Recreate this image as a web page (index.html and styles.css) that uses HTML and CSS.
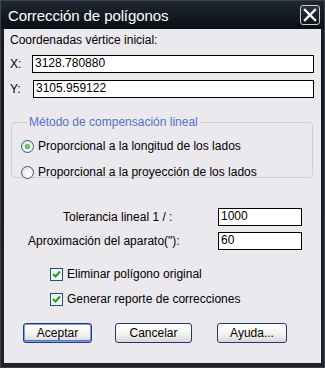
FILE: index.html
```html
<!DOCTYPE html>
<html lang="es">
<head>
    <meta charset="UTF-8">
    <title>Corrección de polígonos</title>
    <link rel="stylesheet" href="styles.css">
</head>
<body>
    <div class="window">
        <div class="titlebar">
            <span class="title">Corrección de polígonos</span>
            <span class="close">
                <svg width="14" height="14" viewBox="0 0 14 14">
                    <path d="M2 2 L12 12 M12 2 L2 12" stroke="#fff" stroke-width="2.4" stroke-linecap="square"/>
                </svg>
            </span>
        </div>
        <div class="client">
            <div class="caption">Coordenadas vértice inicial:</div>
            <div class="coord-row">
                <span class="coord-label">X:</span>
                <div class="textbox x-box">3128.780880</div>
            </div>
            <div class="coord-row">
                <span class="coord-label">Y:</span>
                <div class="textbox y-box">3105.959122</div>
            </div>

            <fieldset class="group">
                <legend>Método de compensación lineal</legend>
                <div class="radio-row">
                    <span class="radio checked"></span>
                    <span>Proporcional a la longitud de los lados</span>
                </div>
                <div class="radio-row">
                    <span class="radio"></span>
                    <span>Proporcional a la proyección de los lados</span>
                </div>
            </fieldset>

            <div class="param-row">
                <span class="param-label tol">Tolerancia lineal 1 / :</span>
                <div class="textbox small-box">1000</div>
            </div>
            <div class="param-row">
                <span class="param-label aprox">Aproximación del aparato("):</span>
                <div class="textbox small-box">60</div>
            </div>

            <div class="check-row first">
                <span class="check"><svg width="9" height="9" viewBox="0 0 9 9"><path d="M1 4 L3.5 6.5 L8 1.5" fill="none" stroke="#21a121" stroke-width="2"/></svg></span>
                <span>Eliminar polígono original</span>
            </div>
            <div class="check-row">
                <span class="check"><svg width="9" height="9" viewBox="0 0 9 9"><path d="M1 4 L3.5 6.5 L8 1.5" fill="none" stroke="#21a121" stroke-width="2"/></svg></span>
                <span>Generar reporte de correcciones</span>
            </div>

            <div class="buttons">
                <button class="btn default aceptar">Aceptar</button>
                <button class="btn cancelar">Cancelar</button>
                <button class="btn ayuda">Ayuda...</button>
            </div>
        </div>
    </div>
</body>
</html>
```

FILE: styles.css
```css
body {
    margin: 0;
    background-color: #1b1f26;
    font-family: 'Liberation Sans', Arial, sans-serif;
    font-size: 11px;
    color: #000;
}
.window {
    width: 325px;
    height: 368px;
    box-sizing: border-box;
    background: linear-gradient(#262c36, #15191f 40px, #202329);
    border: 1px solid #3d424a;
    display: flex;
    flex-direction: column;
}
.titlebar {
    height: 28px;
    display: flex;
    align-items: center;
    justify-content: space-between;
    padding: 0 4px 0 7px;
    background: linear-gradient(#1f2733, #0a0e14);
}
.title {
    color: #fff;
    font-size: 15px;
    letter-spacing: -0.1px;
}
.close {
    width: 18px;
    height: 18px;
    border: 1px solid #c8ccd4;
    border-radius: 3px;
    background: linear-gradient(#2a3140, #10141b);
    display: flex;
    align-items: center;
    justify-content: center;
}
.client {
    margin: 0 3px 4px 3px;
    flex: 1;
    background-color: #ece9ee;
    padding: 5px 0 0 0;
}
.caption {
    margin-left: 6px;
    font-size: 12px;
    line-height: 13px;
}
.coord-row {
    display: flex;
    align-items: center;
    margin-top: 8px;
}
.coord-row + .coord-row {
    margin-top: 7px;
}
.coord-label {
    width: 28px;
    padding-left: 6px;
    box-sizing: border-box;
    font-size: 12px;
}
.textbox {
    height: 18px;
    box-sizing: border-box;
    border: 1px solid #000;
    background: #fff;
    font-size: 12px;
    line-height: 15px;
    padding-left: 2px;
}
.x-box {
    width: 282px;
}
.y-box {
    width: 281px;
    margin-left: 1px;
}
.group {
    margin: 17px 0 0 7px;
    width: 302px;
    height: 63px;
    box-sizing: border-box;
    border: 1px solid #d2d0cc;
    border-radius: 4px;
    padding: 10px 0 0 9px;
}
.group legend {
    color: #5272c8;
    font-size: 12px;
    padding: 0 2px;
    margin-left: 6px;
}
.radio-row {
    display: flex;
    align-items: center;
    gap: 4px;
    font-size: 12px;
    height: 14px;
}
.radio-row + .radio-row {
    margin-top: 12px;
}
.radio {
    width: 11px;
    height: 11px;
    border: 1px solid #2b5b8e;
    border-radius: 50%;
    background: radial-gradient(circle at 60% 65%, #fff, #dcdbd4);
    display: flex;
    align-items: center;
    justify-content: center;
}
.radio.checked::after {
    content: "";
    width: 5px;
    height: 5px;
    border-radius: 50%;
    background: radial-gradient(circle, #6fe06f, #1e9e1e);
}
.param-row {
    display: flex;
    align-items: center;
    margin-top: 6px;
}
.group + .param-row {
    margin-top: 30px;
}
.param-label {
    font-size: 12px;
}
.param-label.tol {
    margin-left: 59px;
    width: 155px;
}
.param-label.aprox {
    margin-left: 24px;
    width: 190px;
}
.small-box {
    width: 84px;
}
.check-row {
    display: flex;
    align-items: center;
    gap: 4px;
    margin-left: 46px;
    font-size: 12px;
    margin-top: 11px;
}
.check-row.first {
    margin-top: 17px;
}
.check {
    width: 13px;
    height: 13px;
    box-sizing: border-box;
    border: 1px solid #1c5180;
    background: #f6f6f2;
    display: flex;
    align-items: center;
    justify-content: center;
}
.buttons {
    display: flex;
    margin: 17px 0 0 19px;
}
.btn {
    height: 20px;
    box-sizing: border-box;
    border: 1px solid #1f3c66;
    border-radius: 3px;
    background: linear-gradient(#ffffff, #f2f1ee 60%, #d6d4de);
    font-family: 'Liberation Sans', Arial, sans-serif;
    font-size: 12px;
    padding: 0;
    color: #000;
}
.btn.default {
    box-shadow: inset 0 0 0 1px #7a9ee0, inset 0 -1px 0 1px #4d78d0;
    border-color: #1c3d78;
}
.aceptar {
    width: 69px;
}
.cancelar {
    width: 77px;
    margin-left: 23px;
}
.ayuda {
    width: 70px;
    margin-left: 25px;
}
```
